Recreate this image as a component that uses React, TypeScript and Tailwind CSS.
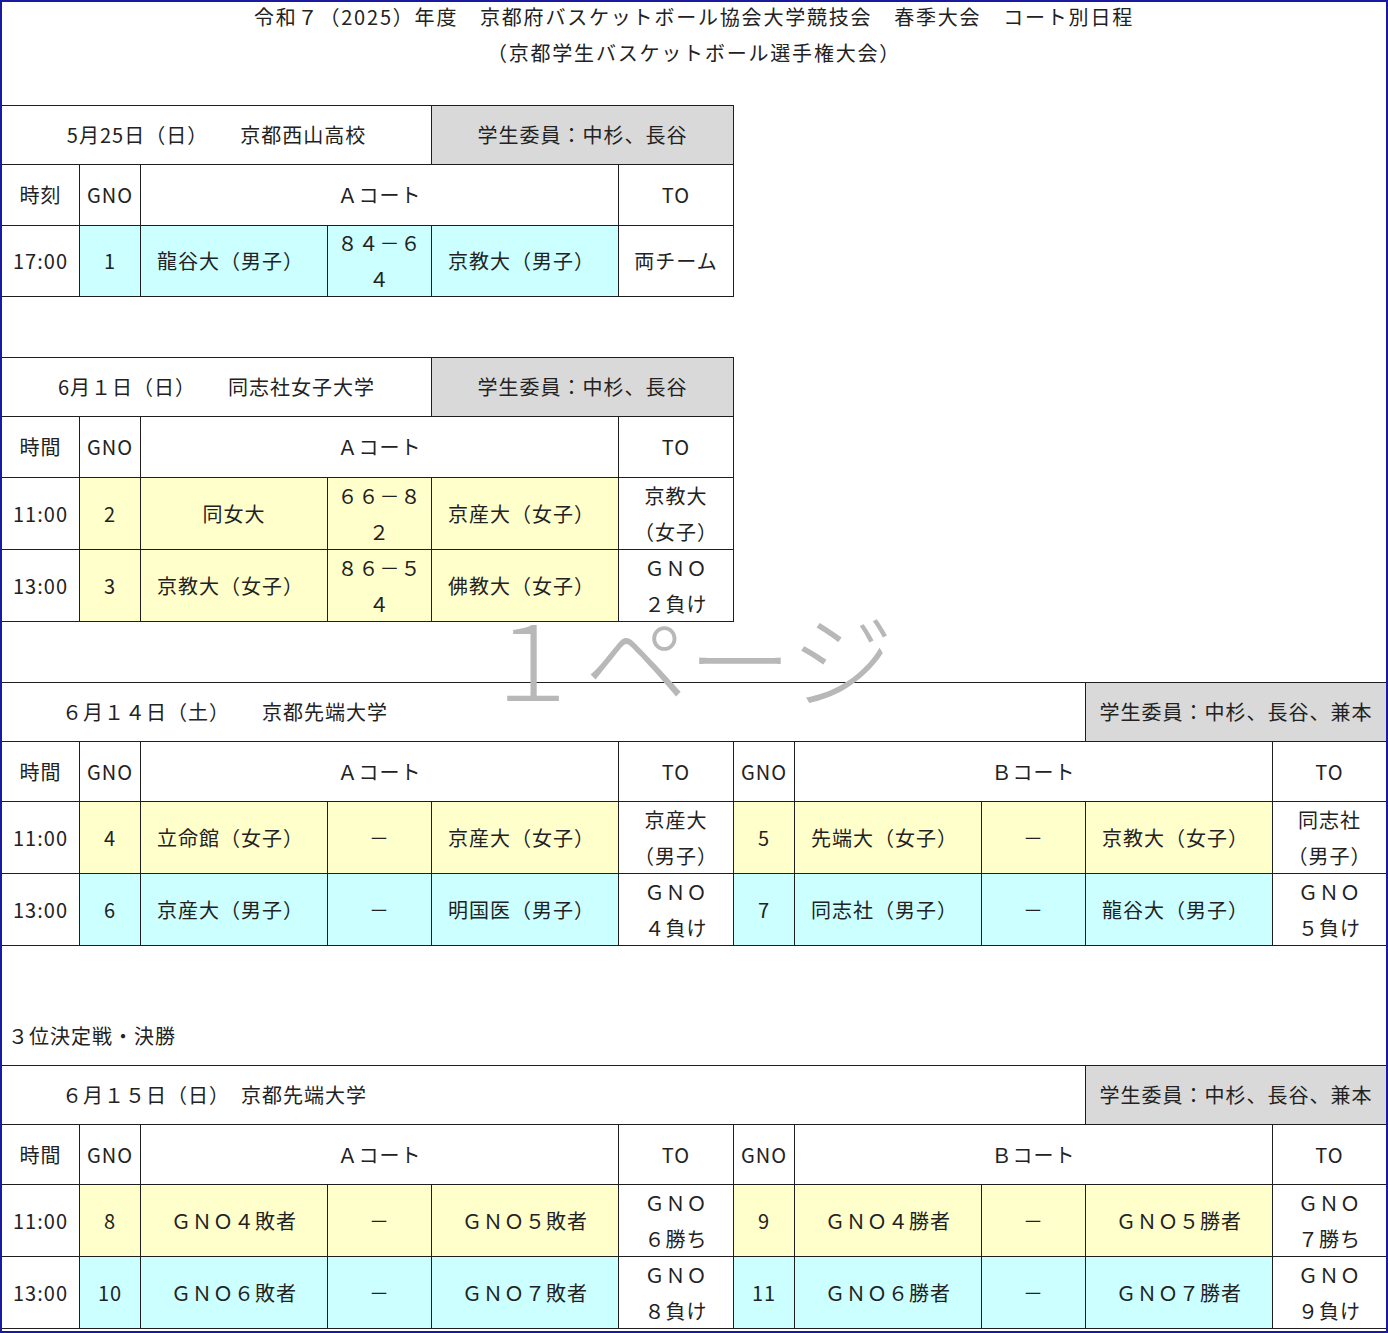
import React from "react";

const B = "border-r border-b border-[#1e1e1e] flex items-center justify-center text-center leading-[36px]";
const CY = "bg-[#ccffff]";
const YE = "bg-[#ffffcc]";
const GR = "bg-[#d9d9d9]";

function C({ c = "", children }: { c?: string; children?: React.ReactNode }) {
  return <div className={`${B} ${c}`}>{children}</div>;
}

function Team({ bg, children, left = true }: { bg: string; children: React.ReactNode; left?: boolean }) {
  return <C c={`${bg} ${left ? "justify-start pl-[16px]" : ""}`}>{children}</C>;
}

function TO({ a, b }: { a: string; b?: string }) {
  return (
    <C c="flex-col">
      <span>{a}</span>
      {b && <span>{b}</span>}
    </C>
  );
}

const cols11 = "grid grid-cols-[78px_61px_187px_104px_187px_115px_61px_187px_104px_187px_113px]";
const cols6 = "grid grid-cols-[78px_61px_187px_104px_187px_115px] w-[732px]";

export default function App() {
  return (
    <div
      className="relative w-[1388px] h-[1333px] border-2 border-[#1a1aa0] bg-white text-[#222] text-[20px] tracking-[1px] overflow-hidden"
      style={{ fontFamily: '"Noto Sans CJK JP", "Noto Sans", sans-serif' }}
    >
      <div className="h-[106px] flex flex-col items-center -mt-[3px] pb-[3px] leading-[36px] tracking-[1.8px]">
        <div>令和７（2025）年度　京都府バスケットボール協会大学競技会　春季大会　コート別日程</div>
        <div>（京都学生バスケットボール選手権大会）</div>
      </div>

      {/* Table 1 */}
      <div className={`${cols6} border-t border-[#1e1e1e] grid-rows-[59px_61px_71px]`}>
        <C c="col-span-4">5月25日（日）　　京都西山高校</C>
        <C c={`col-span-2 ${GR}`}>学生委員：中杉、長谷</C>
        <C>時刻</C>
        <C>GNO</C>
        <C c="col-span-3">Ａコート</C>
        <C>TO</C>
        <C>17:00</C>
        <C c={CY}>1</C>
        <Team bg={CY}>龍谷大（男子）</Team>
        <C c={CY}>８４－６４</C>
        <Team bg={CY}>京教大（男子）</Team>
        <C>両チーム</C>
      </div>

      <div className="h-[60px]" />

      {/* Table 2 */}
      <div className={`${cols6} border-t border-[#1e1e1e] grid-rows-[59px_61px_72px_72px]`}>
        <C c="col-span-4">6月１日（日）　　同志社女子大学</C>
        <C c={`col-span-2 ${GR}`}>学生委員：中杉、長谷</C>
        <C>時間</C>
        <C>GNO</C>
        <C c="col-span-3">Ａコート</C>
        <C>TO</C>
        <C>11:00</C>
        <C c={YE}>2</C>
        <Team bg={YE} left={false}>同女大</Team>
        <C c={YE}>６６－８２</C>
        <Team bg={YE}>京産大（女子）</Team>
        <TO a="京教大" b="（女子）" />
        <C>13:00</C>
        <C c={YE}>3</C>
        <Team bg={YE}>京教大（女子）</Team>
        <C c={YE}>８６－５４</C>
        <Team bg={YE}>佛教大（女子）</Team>
        <TO a="ＧＮＯ" b="２負け" />
      </div>

      <div className="h-[60px]" />

      {/* Table 3 */}
      <div className={`${cols11} border-t border-[#1e1e1e] grid-rows-[59px_60px_72px_72px]`}>
        <C c="col-span-9 justify-start pl-[60px]">６月１４日（土）　　京都先端大学</C>
        <C c={`col-span-2 ${GR} border-r-0`}>学生委員：中杉、長谷、兼本</C>
        <C>時間</C>
        <C>GNO</C>
        <C c="col-span-3">Ａコート</C>
        <C>TO</C>
        <C>GNO</C>
        <C c="col-span-3">Ｂコート</C>
        <C c="border-r-0">TO</C>
        <C>11:00</C>
        <C c={YE}>4</C>
        <Team bg={YE}>立命館（女子）</Team>
        <C c={YE}>－</C>
        <Team bg={YE}>京産大（女子）</Team>
        <TO a="京産大" b="（男子）" />
        <C c={YE}>5</C>
        <Team bg={YE}>先端大（女子）</Team>
        <C c={YE}>－</C>
        <Team bg={YE}>京教大（女子）</Team>
        <C c="flex-col border-r-0"><span>同志社</span><span>（男子）</span></C>
        <C>13:00</C>
        <C c={CY}>6</C>
        <Team bg={CY}>京産大（男子）</Team>
        <C c={CY}>－</C>
        <Team bg={CY}>明国医（男子）</Team>
        <TO a="ＧＮＯ" b="４負け" />
        <C c={CY}>7</C>
        <Team bg={CY}>同志社（男子）</Team>
        <C c={CY}>－</C>
        <Team bg={CY}>龍谷大（男子）</Team>
        <C c="flex-col border-r-0"><span>ＧＮＯ</span><span>５負け</span></C>
      </div>

      <div className="h-[119px] flex items-end pl-[6px] pb-[14px]">３位決定戦・決勝</div>

      {/* Table 4 */}
      <div className={`${cols11} border-t border-[#1e1e1e] grid-rows-[59px_60px_72px_72px]`}>
        <C c="col-span-9 justify-start pl-[60px]">６月１５日（日）　京都先端大学</C>
        <C c={`col-span-2 ${GR} border-r-0`}>学生委員：中杉、長谷、兼本</C>
        <C>時間</C>
        <C>GNO</C>
        <C c="col-span-3">Ａコート</C>
        <C>TO</C>
        <C>GNO</C>
        <C c="col-span-3">Ｂコート</C>
        <C c="border-r-0">TO</C>
        <C>11:00</C>
        <C c={YE}>8</C>
        <Team bg={YE} left={false}>ＧＮＯ４敗者</Team>
        <C c={YE}>－</C>
        <Team bg={YE} left={false}>ＧＮＯ５敗者</Team>
        <TO a="ＧＮＯ" b="６勝ち" />
        <C c={YE}>9</C>
        <Team bg={YE} left={false}>ＧＮＯ４勝者</Team>
        <C c={YE}>－</C>
        <Team bg={YE} left={false}>ＧＮＯ５勝者</Team>
        <C c="flex-col border-r-0"><span>ＧＮＯ</span><span>７勝ち</span></C>
        <C>13:00</C>
        <C c={CY}>10</C>
        <Team bg={CY} left={false}>ＧＮＯ６敗者</Team>
        <C c={CY}>－</C>
        <Team bg={CY} left={false}>ＧＮＯ７敗者</Team>
        <TO a="ＧＮＯ" b="８負け" />
        <C c={CY}>11</C>
        <Team bg={CY} left={false}>ＧＮＯ６勝者</Team>
        <C c={CY}>－</C>
        <Team bg={CY} left={false}>ＧＮＯ７勝者</Team>
        <C c="flex-col border-r-0"><span>ＧＮＯ</span><span>９負け</span></C>
      </div>

      <div className="absolute left-[478px] top-[592px] text-[104px] leading-[124px] tracking-normal text-[#b8b8b8] font-light pointer-events-none whitespace-nowrap">
        １ページ
      </div>
    </div>
  );
}
